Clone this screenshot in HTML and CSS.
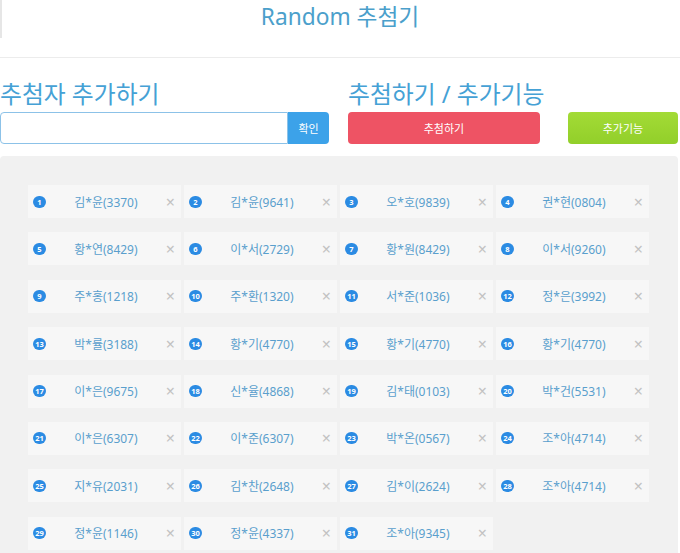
FILE: index.html
```html
<!DOCTYPE html>
<html lang="ko">
<head>
    <meta charset="UTF-8">
    <meta name="viewport" content="width=device-width, initial-scale=1.0">
    <title>Random 추첨기</title>
    <link rel="stylesheet" href="styles.css">
</head>
<body>
    <div class="header">
        <h1>Random 추첨기</h1>
    </div>
    <div class="controls">
        <div class="add-box">
            <h2>추첨자 추가하기</h2>
            <div class="input-row">
                <input type="text" id="name">
                <button class="ok-btn" onclick="addPerson()">확인</button>
            </div>
        </div>
        <div class="draw-box">
            <h2>추첨하기 / 추가기능</h2>
            <div class="btn-row">
                <button class="draw-btn">추첨하기</button>
                <button class="extra-btn">추가기능</button>
            </div>
        </div>
    </div>
    <div class="list-panel">
        <div class="list" id="list"></div>
    </div>
    <script>
        let people = [
            "김*윤(3370)", "김*윤(9641)", "오*호(9839)", "권*현(0804)",
            "황*연(8429)", "이*서(2729)", "황*원(8429)", "이*서(9260)",
            "주*홍(1218)", "주*환(1320)", "서*준(1036)", "정*은(3992)",
            "박*률(3188)", "황*기(4770)", "황*기(4770)", "황*기(4770)",
            "이*은(9675)", "신*율(4868)", "김*태(0103)", "박*건(5531)",
            "이*은(6307)", "이*준(6307)", "박*온(0567)", "조*아(4714)",
            "지*유(2031)", "김*찬(2648)", "김*이(2624)", "조*아(4714)",
            "정*윤(1146)", "정*윤(4337)", "조*아(9345)"
        ];

        function render() {
            let list = document.getElementById("list");
            list.innerHTML = "";
            people.forEach((name, index) => {
                let div = document.createElement("div");
                div.classList.add("person");
                div.innerHTML = `<span class="badge">${index + 1}</span>
                    <span class="person-name">${name}</span>
                    <span class="remove" onclick="removePerson(${index})">&times;</span>`;
                list.appendChild(div);
            });
        }

        function addPerson() {
            let input = document.getElementById("name");
            if (!input.value) return;
            people.push(input.value);
            input.value = "";
            render();
        }

        function removePerson(index) {
            people.splice(index, 1);
            render();
        }

        render();
    </script>
</body>
</html>
```

FILE: styles.css
```css
body {
    margin: 0;
    font-family: "Noto Sans", "Noto Sans CJK KR", sans-serif;
    background: #fff;
}
.header {
    height: 57px;
    border-bottom: 1px solid #ececec;
    position: relative;
}
.header::before {
    content: "";
    position: absolute;
    left: 0;
    top: 0;
    width: 2px;
    height: 38px;
    background: #e6e6e6;
}
h1 {
    margin: 0;
    padding-top: 1px;
    text-align: center;
    font-size: 22.7px;
    font-weight: normal;
    color: #4b9fcb;
    line-height: 32px;
}
.controls {
    display: flex;
    gap: 19px;
    padding-top: 20px;
}
.add-box {
    width: 329px;
}
.draw-box {
    width: 330px;
}
h2 {
    margin: 0 0 2px;
    font-size: 23.8px;
    font-weight: normal;
    color: #45a1d5;
    line-height: 32px;
}
.input-row {
    display: flex;
    height: 32px;
}
.input-row input {
    flex: 1;
    box-sizing: border-box;
    height: 32px;
    margin: 0;
    border: 1px solid #8cc2e8;
    border-radius: 4px 0 0 4px;
    padding: 0 8px;
}
.ok-btn {
    width: 41px;
    border: none;
    border-radius: 0 4px 4px 0;
    background: #3ca2e9;
    color: #fff;
    font-family: inherit;
    font-size: 11px;
    cursor: pointer;
}
.btn-row {
    display: flex;
    justify-content: space-between;
    height: 32px;
}
.draw-btn, .extra-btn {
    border: none;
    border-radius: 4px;
    color: #fff;
    font-family: inherit;
    font-size: 11px;
    cursor: pointer;
}
.draw-btn {
    width: 192px;
    background: #ee5364;
}
.extra-btn {
    width: 110px;
    background: linear-gradient(#a3db36, #92cf2a);
}
.list-panel {
    margin-top: 12px;
    width: 678px;
    background: #f1f1f1;
    border-radius: 4px;
    padding: 29px 29px 30px 28px;
    box-sizing: border-box;
}
.list {
    display: grid;
    grid-template-columns: repeat(4, 153px);
    column-gap: 3px;
    row-gap: 14.4px;
}
.person {
    display: flex;
    align-items: center;
    height: 33px;
    background: #f7f7f7;
    padding: 0 6px 0 5px;
}
.badge {
    min-width: 13px;
    height: 12px;
    padding: 0 2px;
    box-sizing: border-box;
    border-radius: 6px;
    background: #2b8be3;
    color: #fff;
    font-size: 7.5px;
    font-weight: bold;
    line-height: 12px;
    text-align: center;
}
.person-name {
    flex: 1;
    text-align: center;
    font-size: 12px;
    color: #5a9fcd;
}
.remove {
    color: #c2c2c2;
    font-size: 16px;
    cursor: pointer;
}
```
